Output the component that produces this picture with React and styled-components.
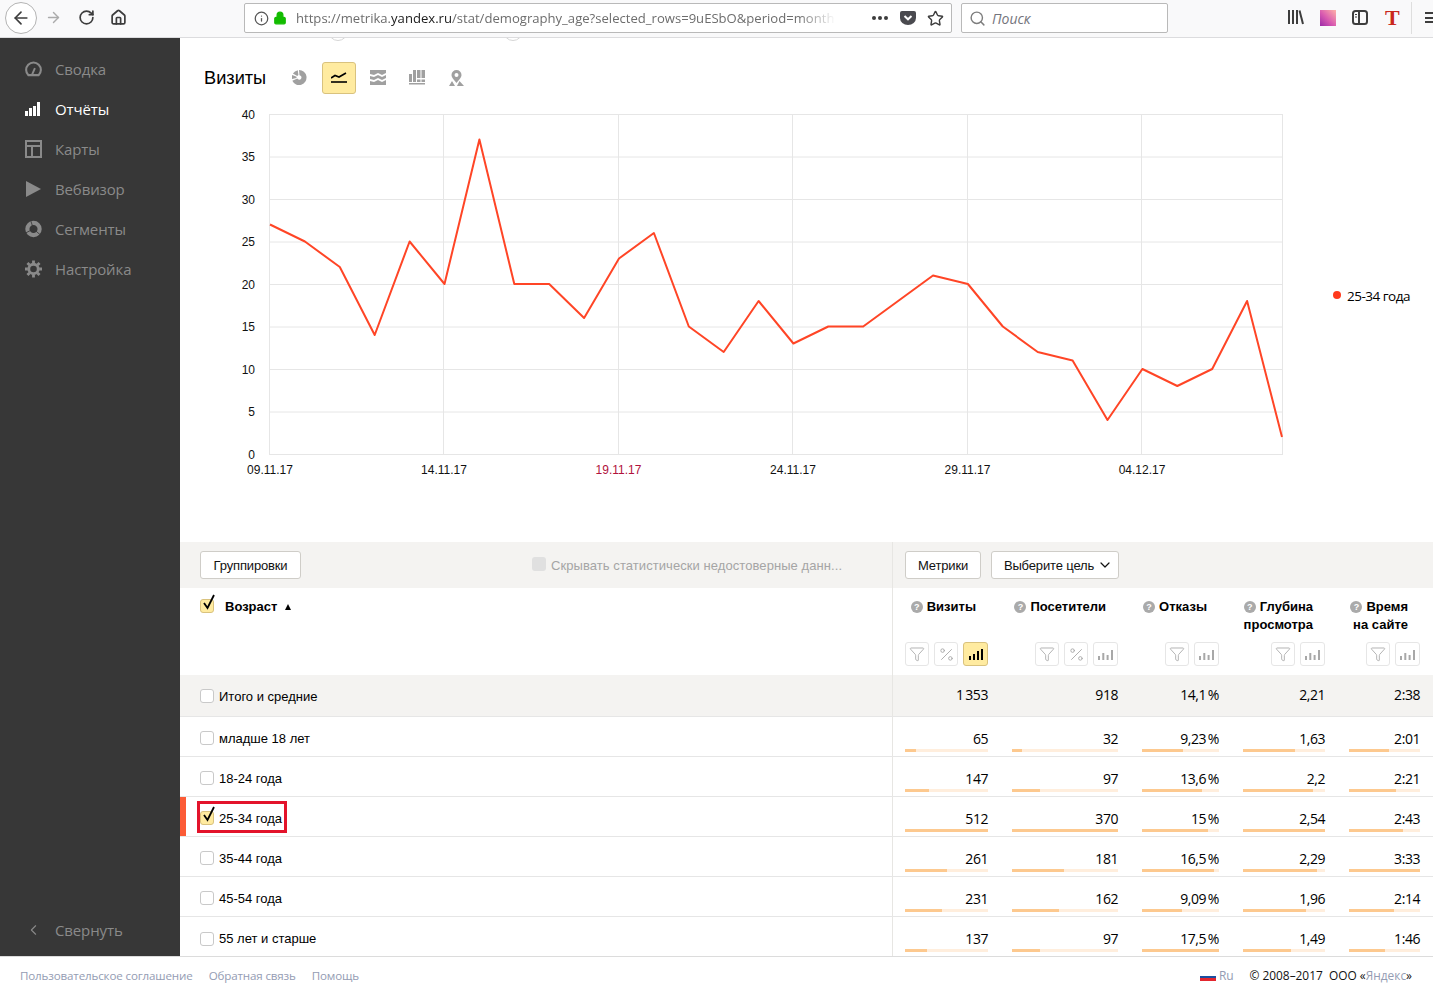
import React from 'react';
import styled, { createGlobalStyle } from 'styled-components';
import { Funnel, Percent, ArrowLeft, ArrowRight, RotateCw, Home, Info, Lock, Star, Search, ChevronLeft, ChevronDown } from 'lucide-react';

const Global = createGlobalStyle`
  html, body { margin: 0; padding: 0; background: #fff; }
  body { font-family: "Liberation Sans", Arial, sans-serif; width: 1433px; height: 992px; overflow: hidden; }
  * { box-sizing: border-box; }
`;

const Page = styled.div`
  width: 1433px; height: 992px; display: flex; flex-direction: column; overflow: hidden; position: relative;
`;

/* browser chrome */
const Browser = styled.header`
  height: 38px; flex: none; background: #f9f9fa; border-bottom: 1px solid #dcdcde;
  display: flex; align-items: flex-start; position: relative; overflow: hidden;
`;
const BackBtn = styled.div`
  width: 32px; height: 32px; border-radius: 50%; background: #fff; border: 1px solid #b4b4b4;
  margin: 2px 0 0 5px; display: flex; align-items: center; justify-content: center; color: #3d3d3d; flex: none;
`;
const NavIcon = styled.div`
  margin: 9px 0 0 ${p => p.$ml}px; width: 17px; height: 17px; flex: none; display: flex; color: ${p => p.$c || '#3d3d3d'};
`;
const Field = styled.div`
  height: 30px; margin: 3px 0 0 ${p => p.$ml}px; width: ${p => p.$w}px; flex: none; background: #fff;
  border: 1px solid #b9b9b9; border-radius: 2px; display: flex; align-items: center; font-family: "Open Sans", sans-serif;
`;
const UrlText = styled.div`
  font-size: 13.1px; color: #6d6d6d; width: 540px; white-space: nowrap; overflow: hidden; flex: none; margin-left: 9px; font-weight: 400;
  -webkit-mask-image: linear-gradient(to right, #000 93%, transparent 100%);
  mask-image: linear-gradient(to right, #000 93%, transparent 100%);
  b { font-weight: 400; color: #1a1a1a; }
`;
const Placeholder = styled.span`
  font-size: 14px; font-style: italic; color: #74747c; margin-left: 6px;
`;
const Swatch = styled.div`
  width: 16px; height: 16px; margin: 10px 0 0 16px; flex: none;
  background: linear-gradient(45deg, #9c2aa8 0%, #d95bb0 45%, #ffb3a8 100%);
`;
const Serif = styled.div`
  font-family: "Liberation Serif", serif; font-size: 22px; font-weight: 700; color: #c9281c; width: 14px; margin: 5px 0 0 17px; line-height: 26px; flex: none;
`;
const Sep = styled.div`
  width: 1px; height: 32px; background: #dedede; margin: 2px 0 0 12px; flex: none;
`;
const Hamburger = styled.div`
  margin: 12px 0 0 13px; width: 9px; height: 11px; flex: none;
  border-top: 2px solid #3d3d3d; border-bottom: 2px solid #3d3d3d; position: relative;
  &::after { content: ""; display: block; height: 2px; background: #3d3d3d; margin-top: 2.5px; }
`;

/* body */
const Body = styled.div`
  height: 918px; flex: none; display: flex; min-height: 0;
`;
const Side = styled.nav`
  width: 180px; flex: none; background: #373737; display: flex; flex-direction: column; padding: 11px 0 6px;
`;
const NavItem = styled.div`
  height: 40px; display: flex; align-items: center; padding-left: 25px; gap: 13px;
  font-family: "Open Sans", sans-serif; font-size: 15px; letter-spacing: -0.12px; color: ${p => p.$on ? '#fff' : '#8a8a8a'};
  &:last-child { margin-top: auto; }
  svg { flex: none; width: 17px; height: 18px; }
`;
const Main = styled.main`
  flex: 1; min-width: 0; display: flex; flex-direction: column;
`;
const ScrollEdge = styled.div`
  height: 3px; flex: none; display: flex; overflow: hidden; padding-left: 148px; gap: 155px;
`;
const EdgeDot = styled.div`
  width: 20px; height: 20px; border-radius: 50%; border: 1px solid #d5d5d5; margin-top: -17px; flex: none;
`;
const ChartHead = styled.div`
  height: 33px; margin-top: 20px; flex: none; display: flex; align-items: center; padding-left: 24px;
`;
const Title = styled.h2`
  margin: 0 25px 0 0; font-size: 18.2px; font-weight: 400; color: #000; width: 64px; white-space: nowrap; line-height: 32px;
`;
const PieIcon = styled.svg`
  color: #a0a0a0; margin: 0 15px 0 -1px; flex: none;
`;
const ChartBtn = styled.div`
  width: 34px; height: 32px; flex: none; display: flex; align-items: center; justify-content: center; border-radius: 3px;
  margin-right: 5px; color: ${p => p.$on ? '#000' : '#a0a0a0'};
  background: ${p => p.$on ? '#ffeba0' : 'transparent'};
  border: 1px solid ${p => p.$on ? '#d9c27e' : 'transparent'};
`;
const ChartRow = styled.div`
  flex: none; height: 448px; display: flex; padding-top: 10px;
`;
const ChartSvg = styled.svg`
  width: 1140px; height: 380px; flex: none; display: block;
  text { font-family: "Liberation Sans", Arial, sans-serif; font-size: 12px; fill: #111; }
`;
const Legend = styled.div`
  margin: 182px 0 0 13px; display: flex; align-items: center; gap: 6px; font-family: "Open Sans", sans-serif; font-size: 13.5px; letter-spacing: -0.5px; color: #000; height: 20px; white-space: nowrap;
`;
const LegendDot = styled.span`
  width: 8px; height: 8px; border-radius: 50%; background: #ff3a1d; margin-top: -2px; flex: none;
`;

/* table */
const Table = styled.section`
  flex: none; display: grid; grid-template-columns: 713px 540px; grid-auto-rows: auto; align-content: start;
`;
const Cell = styled.div`
  border-right: ${p => p.$left ? '1px solid #e7e6e3' : '0'};
  background: ${p => p.$grey ? '#f4f3f1' : '#fff'};
  border-bottom: ${p => p.$line ? '1px solid #e6e6e6' : '0'};
  height: ${p => p.$h}px; position: relative;
`;
const ToolLeft = styled(Cell)`
  display: flex; align-items: center; padding-left: 20px;
`;
const ToolRight = styled(Cell)`
  display: flex; align-items: center; padding-left: 12px; gap: 10px;
`;
const Btn = styled.div`
  height: 28px; width: ${p => p.$w}px; flex: none; background: #fff; border: 1px solid #cfcdc8; border-radius: 3px;
  display: flex; align-items: center; justify-content: center; gap: 3px; font-size: 13px; letter-spacing: -0.15px; color: #111; white-space: nowrap;
`;
const Caret = styled(ChevronDown)`
  margin: -1px -7px 0 0; flex: none;
`;
const Hide = styled.div`
  margin-left: 231px; display: flex; align-items: center; gap: 5px; font-size: 13px; letter-spacing: 0.07px; color: #a5a5a5; white-space: nowrap;
`;
const HideBox = styled.span`
  width: 14px; height: 14px; border-radius: 3px; background: #e0e0e0; flex: none; margin-top: -2px;
`;
const Box = styled.span`
  width: 14px; height: 14px; flex: none; border-radius: 3px; position: relative;
  background: ${p => p.$on ? '#ffeba0' : '#fff'};
  border: 1px solid ${p => p.$on ? '#d9c27e' : '#c9c9c9'};
`;
const Tick = styled.svg`
  position: absolute; left: 1px; top: -6px; width: 15px; height: 18px; overflow: visible;
`;
const DimHead = styled.div`
  display: flex; padding: 10px 0 0 20px; height: 87px; align-items: flex-start; font-weight: 700; font-size: 13px; color: #000;
  border-right: 1px solid #e7e6e3;
  ${Box} { margin-top: 1px; }
`;
const DimText = styled.span`
  margin-left: 11px; line-height: 18px;
`;
const Sort = styled.span`
  display: inline-block; width: 0; height: 0; margin: 6px 0 0 8px; border: 3.5px solid transparent; border-top: 0; border-bottom: 6px solid #000;
`;
const MetricGrid = styled.div`
  display: grid; grid-template-columns: 83px 106px 77px 82px 71px; column-gap: 24px; padding: 0 13px 0 12px; height: 100%;
`;
const MetricHead = styled.div`
  display: flex; flex-direction: column; height: 87px; padding-top: 10px;
`;
const MetricName = styled.div`
  height: 44px; padding-right: 12px; text-align: right; font-weight: 700; font-size: 13px; line-height: 18px; color: #000; white-space: nowrap;
`;
const Q = styled.span`
  display: inline-flex; width: 12px; height: 12px; border-radius: 50%; background: #aaa; color: #fff; font-size: 9px; font-weight: 700;
  align-items: center; justify-content: center; margin-right: 4px; vertical-align: 1px; line-height: 12px;
`;
const Tools = styled.div`
  display: flex; justify-content: flex-end; gap: 5px;
`;
const Tool = styled.div`
  width: ${p => p.$w || 24}px; height: 24px; flex: none; border-radius: 3px; display: flex; align-items: center; justify-content: center;
  background: ${p => p.$on ? '#ffeba0' : '#fff'}; border: 1px solid ${p => p.$on ? '#d9c27e' : '#e6e6e6'};
  color: ${p => p.$on ? '#000' : '#a8a8a8'};
`;
const Label = styled.div`
  display: flex; align-items: center; height: ${p => p.$h ? `${p.$h}px` : '100%'}; padding-left: 20px; gap: 5px; font-size: 13px; color: #000; white-space: nowrap;
  padding-top: ${p => p.$pt ?? 3}px;
`;
const Mark = styled.div`
  position: absolute; left: 0; top: 0; bottom: 0; width: 6px; background: #fc5b36;
`;
const Outline = styled.div`
  position: absolute; left: 17px; top: 4px; width: 90px; height: 32px; border: 3px solid #e3132b; pointer-events: none;
`;
const Num = styled.div`
  position: relative; height: 100%; text-align: right; font-family: "Open Sans", sans-serif; font-size: 14px; letter-spacing: -0.45px; color: #000; line-height: 20px;
  padding-top: ${p => p.$top}px; white-space: nowrap;
`;
const Track = styled.div`
  position: absolute; left: 0; right: 0; top: 32px; height: 3px; background: #ffeedd;
`;
const Fill = styled.div`
  height: 100%; background: #fdc98f;
`;

/* footer */
const Footer = styled.footer`
  height: 36px; flex: none; border-top: 1px solid #dcdcdc; display: flex; align-items: center; padding: 1px 21px 0 20px; font-family: "Open Sans", sans-serif; font-size: 11.6px; color: #949cb3; letter-spacing: -0.15px;
`;
const FootLink = styled.span`
  margin-right: 16px; white-space: nowrap;
`;
const Flag = styled.span`
  margin-left: auto; width: 16px; height: 8px; margin-top: 3px; flex: none;
  background: linear-gradient(#fff 0 33%, #1a4fa0 33% 66%, #e3262e 66%);
`;
const Copy = styled.span`
  color: #111; margin-left: 16px; white-space: pre; font-size: 11.9px; letter-spacing: 0;
  i { font-style: normal; color: #949cb3; }
`;
const Ru = styled.span`
  margin-left: 3px; font-size: 12px;
`;

const Bars = () => (
  <svg width="14" height="11" viewBox="0 0 14 11"><path fill="currentColor" d="M0 7h2v4H0zM4 5h2v6H4zM8 2h2v9H8zM12 0h2v11h-2z" /></svg>
);
const SmallBars = () => (
  <svg width="15" height="11" viewBox="0 0 15 11"><path fill="currentColor" d="M0 7h2v4H0zM4.3 4h2v7h-2zM8.600 6h2v5h-2zM13 1h2v10h-2z" /></svg>
);

const values = [27,25,22,14,25,20,37,20,20,16,23,26,15,12,18,13,15,15,18,21,20,15,12,11,4,10,8,10,18,2];
const X0 = 90, Xn = 1102, Y0 = 350, U = 8.5;
const points = values.map((v, i) => `${(X0 + (i * (Xn - X0)) / 29).toFixed(1)},${Y0 - v * U}`).join(' ');
const xTicks = [['09.11.17', 90], ['14.11.17', 264], ['19.11.17', 438.5], ['24.11.17', 613], ['29.11.17', 787.5], ['04.12.17', 962]];

const Chart = () => (
  <ChartSvg viewBox="180 104 1140 380" preserveAspectRatio="none">
    <g transform="translate(180 104)">
      {[0,5,10,15,20,25,30,35,40].map(v => (
        <g key={v}>
          <line x1={X0 - 1} x2={Xn + 1} y1={Y0 - v * U + 0.5} y2={Y0 - v * U + 0.5} stroke="#e6e6e6" />
          <text x="75" y={Y0 - v * U + 4.5} textAnchor="end">{v}</text>
        </g>
      ))}
      {[90, 264, 439, 613, 788, 962, 1103].map(x => (
        <line key={x} x1={x - 0.5} x2={x - 0.5} y1={Y0 - 40 * U} y2={Y0} stroke="#e6e6e6" />
      ))}
      {xTicks.map(([t, x]) => (
        <text key={t} x={x} y={369.5} textAnchor="middle" style={t === '19.11.17' ? { fill: '#b1123c' } : undefined}>{t}</text>
      ))}
      <polyline points={points} fill="none" stroke="#ff4526" strokeWidth="2" strokeLinejoin="round" />
    </g>
  </ChartSvg>
);

const rows = [
  ['младше 18 лет', ['65', 13], ['32', 9.5], ['9,23\u2009%', 53], ['1,63', 64], ['2:01', 57]],
  ['18-24 года', ['147', 29], ['97', 26.5], ['13,6\u2009%', 78], ['2,2', 85], ['2:21', 66]],
  ['25-34 года', ['512', 100], ['370', 100], ['15\u2009%', 86], ['2,54', 100], ['2:43', 76]],
  ['35-44 года', ['261', 51], ['181', 49], ['16,5\u2009%', 94], ['2,29', 90], ['3:33', 100]],
  ['45-54 года', ['231', 44.6], ['162', 44.4], ['9,09\u2009%', 52], ['1,96', 77], ['2:14', 63]],
  ['55 лет и старше', ['137', 27], ['97', 26.5], ['17,5\u2009%', 100], ['1,49', 59], ['1:46', 50]],
];
const metrics = [
  { name: <>Визиты</>, pct: true, on: true },
  { name: <>Посетители</>, pct: true },
  { name: <>Отказы</> },
  { name: <>Глубина<br />просмотра</> },
  { name: <>Время<br />на сайте</> },
];
const totals = ['1\u2009353', '918', '14,1\u2009%', '2,21', '2:38'];

const Check = () => (
  <Tick viewBox="0 0 15 18"><path d="M2 9l3.500 5L12 1" fill="none" stroke="#000" strokeWidth="1.8" /></Tick>
);

export default function App() {
  return (
    <Page>
      <Global />
      <Browser>
        <BackBtn><ArrowLeft size={20} strokeWidth={2} /></BackBtn>
        <NavIcon $ml={8} $c="#ababab"><ArrowRight size={17} strokeWidth={2} /></NavIcon>
        <NavIcon $ml={16}><RotateCw size={17} strokeWidth={2.4} /></NavIcon>
        <NavIcon $ml={15}><Home size={17} strokeWidth={2.4} /></NavIcon>
        <Field $ml={117} $w={708}>
          <Info size={15} color="#555" style={{ marginLeft: 9, flex: 'none' }} />
          <Lock size={14} color="#12bc00" fill="#12bc00" style={{ marginLeft: 4, flex: 'none' }} />
          <UrlText>https://metrika.<b>yandex.ru</b>/stat/demography_age?selected_rows=9uESbO&amp;period=month</UrlText>
          <svg width="16" height="4" viewBox="0 0 16 4" style={{ marginLeft: 36, flex: 'none' }}><g fill="#3d3d3d"><circle cx="2" cy="2" r="2" /><circle cx="8" cy="2" r="2" /><circle cx="14" cy="2" r="2" /></g></svg>
          <svg width="16" height="14" viewBox="0 0 16 14" style={{ marginLeft: 12, flex: 'none' }}><path fill="#4a4a4f" d="M2 0h12a2 2 0 0 1 2 2v5a8 7 0 0 1-16 0V2a2 2 0 0 1 2-2z" /><path d="M4.500 5L8 8.300 11.500 5" stroke="#fff" strokeWidth="2" fill="none" /></svg>
          <Star size={17} color="#3d3d3d" strokeWidth={2} style={{ marginLeft: 11, flex: 'none' }} />
        </Field>
        <Field $ml={9} $w={207}>
          <Search size={17} color="#7d7d7d" strokeWidth={2} style={{ marginLeft: 7, flex: 'none' }} />
          <Placeholder>Поиск</Placeholder>
        </Field>
        <svg width="16" height="15" viewBox="0 0 16 15" style={{ margin: '10px 0 0 120px', flex: 'none' }}><path fill="#3d3d3d" d="M0 0h2v14H0zM4 0h2v14H4zM8 0h2v14H8z" /><path stroke="#3d3d3d" strokeWidth="2" d="M11.500 0.500L15 14" /></svg>
        <Swatch />
        <svg width="16" height="15" viewBox="0 0 16 15" style={{ margin: '10px 0 0 16px', flex: 'none' }}><rect x="1" y="1" width="14" height="13" rx="2.5" fill="none" stroke="#3d3d3d" strokeWidth="2" /><path d="M7 1v13" stroke="#3d3d3d" strokeWidth="2" /><path d="M3 4.500h2M3 7h2" stroke="#3d3d3d" /></svg>
        <Serif>T</Serif>
        <Sep />
        <Hamburger />
      </Browser>
      <Body>
        <Side>
          <NavItem>
            <svg viewBox="0 0 18 18"><path fill="none" stroke="currentColor" strokeWidth="2.2" d="M3.600 15.500A7.800 7.800 0 1 1 14.400 15.500z" /><path stroke="currentColor" strokeWidth="2" d="M7.500 15l3-7" /></svg>
            Сводка
          </NavItem>
          <NavItem $on>
            <svg viewBox="0 0 17 18"><path fill="currentColor" d="M0 11h3v5H0zM4 8h3v8H4zM8 6h3v10H8zM12 2h3v14h-3z" /></svg>
            Отчёты
          </NavItem>
          <NavItem>
            <svg viewBox="0 0 17 18"><path fill="none" stroke="currentColor" strokeWidth="2" d="M1 1h15v16H1zM1 6h15M7 6v11" /></svg>
            Карты
          </NavItem>
          <NavItem>
            <svg viewBox="0 0 17 18"><path fill="currentColor" d="M1 1l15 8-15 8z" /></svg>
            Вебвизор
          </NavItem>
          <NavItem>
            <svg viewBox="0 0 18 18"><circle cx="9" cy="9" r="6.500" fill="none" stroke="currentColor" strokeWidth="4.400" /><path d="M9 9L6 0M9 9L1 13M9 9l7 6" stroke="#373737" strokeWidth="0.9" /></svg>
            Сегменты
          </NavItem>
          <NavItem>
            <svg viewBox="0 0 18 18"><circle cx="9" cy="9" r="5" fill="none" stroke="currentColor" strokeWidth="3" /><g stroke="currentColor" strokeWidth="3"><path d="M9 0v3M9 15v3M0 9h3M15 9h3M2.600 2.600l2.200 2.200M13.200 13.200l2.200 2.200M2.600 15.400l2.200-2.200M13.200 4.800l2.200-2.200" /></g></svg>
            Настройка
          </NavItem>
          <NavItem>
            <ChevronLeft size={17} strokeWidth={1.5} />
            Свернуть
          </NavItem>
        </Side>
        <Main>
          <ScrollEdge><EdgeDot /><EdgeDot /></ScrollEdge>
          <ChartHead>
            <Title>Визиты</Title>
            <PieIcon width="15" height="15" viewBox="0 0 15 15"><path fill="currentColor" d="M7 0a7.500 7.500 0 1 1-6.700 10.800l5-2.300A2.200 2.200 0 1 0 7.500 5.300zM.9 3.600A7.500 7.500 0 0 1 5.800.2l.6 4.800-1.200.9zM.1 9A7.500 7.500 0 0 1 .2 5l4.400 1.700-.1 1.200z" /></PieIcon>
            <ChartBtn $on>
              <svg width="16" height="11" viewBox="0 0 16 11"><path d="M0 6l4-2.500L8 5l7-4" fill="none" stroke="currentColor" strokeWidth="1.600" /><path d="M0 10h16" stroke="currentColor" strokeWidth="1.600" /></svg>
            </ChartBtn>
            <ChartBtn>
              <svg width="16" height="15" viewBox="0 0 16 15"><path fill="currentColor" d="M0 0h16v3l-4 2-4-2-4 2-4-1zM0 6l4 1 4-2 4 2 4-2v3l-4 2-4-2-4 2-4-1zM0 11l4 1 4-2 4 2 4-2v5H0z" /></svg>
            </ChartBtn>
            <ChartBtn>
              <svg width="16" height="15" viewBox="0 0 16 15"><path fill="currentColor" d="M0 4h3v8H0zM4 0h3v12H4zM8 0h3.500v8H8zM12.500 0H16v8h-3.500zM12.500 9.500H16V12h-3.500zM8 9.500h3.500V12H8zM0 13h16v1.500H0z" /></svg>
            </ChartBtn>
            <ChartBtn>
              <svg width="15" height="16" viewBox="0 0 15 16"><path fill="currentColor" fillRule="evenodd" d="M7.500 0a5 5 0 0 1 5 5c0 3-3 5-5 8-2-3-5-5-5-8a5 5 0 0 1 5-5zm0 3a2 2 0 1 0 0 4 2 2 0 0 0 0-4z" /><path fill="currentColor" d="M0 16l3-5 3 5zM10.500 11l4.500 5H8z" /></svg>
            </ChartBtn>
          </ChartHead>
          <ChartRow>
            <Chart />
            <Legend><LegendDot />25-34 года</Legend>
          </ChartRow>
          <Table>
            <ToolLeft $grey $left $h={46}>
              <Btn $w={101}>Группировки</Btn>
              <Hide><HideBox />Скрывать статистически недостоверные данн...</Hide>
            </ToolLeft>
            <ToolRight $grey $h={46}>
              <Btn $w={76}>Метрики</Btn>
              <Btn $w={128}>Выберите цель<Caret size={16} strokeWidth={1.8} /></Btn>
            </ToolRight>
            <DimHead>
              <Box $on><Check /></Box>
              <DimText>Возраст</DimText>
              <Sort />
            </DimHead>
            <Cell $h={87}>
              <MetricGrid>
                {metrics.map((m, i) => (
                  <MetricHead key={i}>
                    <MetricName><Q>?</Q>{m.name}</MetricName>
                    <Tools>
                      <Tool><Funnel size={16} strokeWidth={1.3} /></Tool>
                      {m.pct && <Tool><Percent size={17} strokeWidth={1.3} /></Tool>}
                      <Tool $w={25} $on={m.on}>{m.on ? <Bars /> : <SmallBars />}</Tool>
                    </Tools>
                  </MetricHead>
                ))}
              </MetricGrid>
            </Cell>
            <Cell $grey $left $line $h={42}>
              <Label $pt={1}><Box />Итого и средние</Label>
            </Cell>
            <Cell $grey $line $h={42}>
              <MetricGrid>
                {totals.map(t => <Num key={t} $top={10}>{t}</Num>)}
              </MetricGrid>
            </Cell>
            {rows.map(([name, ...vals], r) => {
              const last = r === rows.length - 1;
              return (
                <React.Fragment key={name}>
                  <Cell $left $line={!last} $h={last ? 39 : 40}>
                    {r === 2 && <Mark />}
                    <Label $h={last ? 40 : undefined}>{r === 2 ? <Box $on><Check /></Box> : <Box />}{name}</Label>
                    {r === 2 && <Outline />}
                  </Cell>
                  <Cell $line={!last} $h={last ? 39 : 40}>
                    <MetricGrid>
                      {vals.map(([t, w], i) => (
                        <Num key={i} $top={12}>
                          {t}
                          <Track><Fill style={{ width: `${w}%` }} /></Track>
                        </Num>
                      ))}
                    </MetricGrid>
                  </Cell>
                </React.Fragment>
              );
            })}
          </Table>
        </Main>
      </Body>
      <Footer>
        <FootLink>Пользовательское соглашение</FootLink>
        <FootLink>Обратная связь</FootLink>
        <FootLink>Помощь</FootLink>
        <Flag />
        <Ru>Ru</Ru>
        <Copy>© 2008–2017  ООО «<i>Яндекс</i>»</Copy>
      </Footer>
    </Page>
  );
}
